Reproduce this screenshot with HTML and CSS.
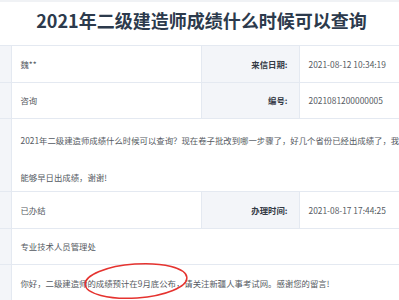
FILE: index.html
```html
<!DOCTYPE html>
<html lang="zh-CN">
<head>
<meta charset="utf-8">
<title>2021年二级建造师成绩什么时候可以查询</title>
<link rel="stylesheet" href="styles.css">
</head>
<body>
<div class="page">
  <h1 class="title">2021年二级建造师成绩什么时候可以查询</h1>
  <div class="sheet">
    <table class="info">
      <colgroup>
        <col class="c-lab"><col class="c-val"><col class="c-lab"><col class="c-val">
      </colgroup>
      <tr class="r36"><th></th><td>魏**</td><th>来信日期:</th><td>2021-08-12 10:34:19</td></tr>
      <tr class="r35"><th></th><td>咨询</td><th>编号:</th><td>2021081200000005</td></tr>
      <tr class="r72"><th></th><td colspan="3"><div class="msg"><div class="line">2021年二级建造师成绩什么时候可以查询？现在卷子批改到哪一步骤了，好几个省份已经出成绩了，我们这边也希望</div><div class="line">能够早日出成绩，谢谢!</div></div></td></tr>
      <tr class="r36"><th></th><td>已办结</td><th>办理时间:</th><td>2021-08-17 17:44:25</td></tr>
      <tr class="r35"><th></th><td colspan="3">专业技术人员管理处</td></tr>
      <tr class="r36"><th></th><td colspan="3">你好，二级建造师的成绩预计在9月底公布，请关注新疆人事考试网。感谢您的留言!</td></tr>
    </table>
  </div>
  <svg class="mark" width="120" height="50" viewBox="0 0 120 50" aria-hidden="true">
    <ellipse cx="59" cy="25" rx="51" ry="17" transform="rotate(-4 59 25)" fill="none" stroke="#e5332f" stroke-width="1.5"/>
  </svg>
</div>
</body>
</html>
```

FILE: styles.css
```css
html, body {
  margin: 0;
  padding: 0;
  overflow: hidden;
}
body {
  background: #f0f2f5;
  font-family: "Noto Sans CJK SC", "Noto Sans", sans-serif;
}
.page {
  position: relative;
  padding-top: 2px;
}
.title {
  margin: 0;
  height: 43px;
  line-height: 36px;
  background: #fff;
  color: #2c3a4c;
  font-size: 18px;
  font-weight: 700;
  text-align: center;
  padding-left: 4px;
  box-sizing: border-box;
}
.sheet {
  overflow: hidden;
  background: #fff;
}
.info {
  margin-left: -87px;
  width: 576px;
  table-layout: fixed;
  border-collapse: collapse;
  font-size: 8.4px;
  border-top: 1px solid #e4e9f1;
}
.c-lab { width: 98px; }
.c-val { width: 190px; }
.info th, .info td {
  padding: 0;
  border: 1px solid #e4e9f1;
  border-top: 0;
  border-left: 0;
  white-space: nowrap;
  overflow: hidden;
}
.info th {
  background: #f3f5f9;
  color: #333a45;
  font-weight: 700;
  text-align: right;
  padding-right: 11px;
}
.info td {
  background: #fff;
  color: #555a62;
  font-weight: 400;
  text-align: left;
  padding-left: 9px;
}
.r36 th, .r36 td { height: 36px; line-height: 36px; }
.r35 th, .r35 td { height: 35px; line-height: 35px; }
.r72 th, .r72 td { height: 72px; vertical-align: top; }
.msg {
  height: 72px;
  padding-top: 3px;
  box-sizing: border-box;
  line-height: 36.5px;
}
.line { white-space: nowrap; }
.mark {
  position: absolute;
  left: 77px;
  top: 256px;
  pointer-events: none;
}
```
